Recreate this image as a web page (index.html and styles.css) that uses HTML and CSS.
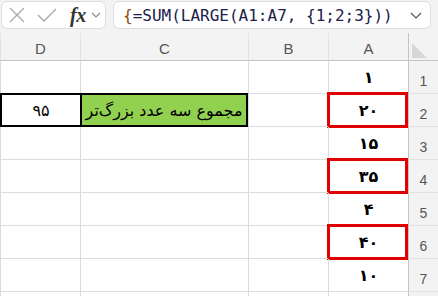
FILE: index.html
```html
<!DOCTYPE html>
<html lang="fa">
<head>
  <meta charset="UTF-8">
  <title>جمع سه عدد بزرگ‌تر</title>
  <link rel="stylesheet" href="styles.css">
</head>
<body>
  <div class="toolbar">
    <div class="namebox">
      <svg class="ico" width="16" height="16" viewBox="0 0 16 16"><path d="M1 1 L15 15 M15 1 L1 15" stroke="#a8a8a8" stroke-width="1.3" fill="none"/></svg>
      <svg class="ico check" width="20" height="14" viewBox="0 0 20 14"><path d="M1 7 L7 13 L19 1" stroke="#a8a8a8" stroke-width="1.3" fill="none"/></svg>
      <span class="fx">fx</span>
      <svg class="chev" width="10" height="6" viewBox="0 0 10 6"><path d="M1 1 L5 5 L9 1" stroke="#8a8a8a" stroke-width="1.2" fill="none"/></svg>
    </div>
    <div class="formula">
      <span class="ftext"><span class="brace">{</span>=SUM(LARGE(A1:A7, {1;2;3}))</span>
      <svg class="chev" width="12" height="7" viewBox="0 0 12 7"><path d="M1 1 L6 6 L11 1" stroke="#555" stroke-width="1.2" fill="none"/></svg>
    </div>
  </div>

  <div class="sheet" dir="rtl">
    <div class="hd corner"><span class="tri"></span></div>
    <div class="hd">A</div>
    <div class="hd">B</div>
    <div class="hd">C</div>
    <div class="hd">D</div>

    <div class="rn">1</div>
    <div class="cell val">۱</div>
    <div class="cell"></div>
    <div class="cell"></div>
    <div class="cell"></div>

    <div class="rn">2</div>
    <div class="cell val mark">۲۰</div>
    <div class="cell"></div>
    <div class="cell label">مجموع سه عدد بزرگ‌تر</div>
    <div class="cell total">۹۵</div>

    <div class="rn">3</div>
    <div class="cell val">۱۵</div>
    <div class="cell"></div>
    <div class="cell"></div>
    <div class="cell"></div>

    <div class="rn">4</div>
    <div class="cell val mark">۳۵</div>
    <div class="cell"></div>
    <div class="cell"></div>
    <div class="cell"></div>

    <div class="rn">5</div>
    <div class="cell val">۴</div>
    <div class="cell"></div>
    <div class="cell"></div>
    <div class="cell"></div>

    <div class="rn">6</div>
    <div class="cell val mark">۴۰</div>
    <div class="cell"></div>
    <div class="cell"></div>
    <div class="cell"></div>

    <div class="rn">7</div>
    <div class="cell val">۱۰</div>
    <div class="cell"></div>
    <div class="cell"></div>
    <div class="cell"></div>

    <div class="rn"></div>
    <div class="cell"></div>
    <div class="cell"></div>
    <div class="cell"></div>
    <div class="cell"></div>
  </div>
</body>
</html>
```

FILE: styles.css
```css
* { box-sizing: border-box; }
body { margin: 0; background: #fff; font-family: "DejaVu Sans", sans-serif; overflow: hidden; }

.toolbar { display: flex; gap: 7px; height: 33px; padding: 1px 7px 0 1px; background: #f3f3f3; }
.namebox, .formula { height: 28px; background: #fff; border: 1px solid #dedede; border-radius: 6px; display: flex; align-items: center; }
.namebox { width: 105px; padding-left: 7px; }
.namebox .check { margin-left: 12px; }
.fx { font-family: "Liberation Serif", serif; font-style: italic; font-weight: bold; font-size: 20px; color: #333; margin-left: 13px; letter-spacing: -0.5px; }
.namebox .chev { margin-left: 5px; }
.formula { flex: 1; padding: 0 8px 0 9px; justify-content: space-between; }
.ftext { font-family: "DejaVu Sans Mono", monospace; font-size: 16px; color: #20204a; white-space: pre; }
.brace { color: #8a4d10; }

.sheet { display: grid; grid-template-columns: 30px 80px 80px 168px 80px; grid-template-rows: 28px repeat(8, 33px); }
.hd { background: #f3f3f3; border-left: 1px solid #e2e2e2; border-bottom: 1px solid #c4c4c4; color: #555; font-family: "Liberation Sans", sans-serif; font-size: 15px; display: flex; align-items: center; justify-content: center; padding-top: 3px; }
.corner { border-left-color: #c4c4c4; position: relative; }
.tri { position: absolute; right: 11px; bottom: 2px; width: 0; height: 0; border-style: solid; border-width: 15px 0 0 15px; border-color: transparent transparent transparent #d6d6d6; }
.rn { background: #f3f3f3; border-left: 1px solid #c4c4c4; border-bottom: 1px solid #e2e2e2; color: #555; font-family: "Liberation Sans", sans-serif; font-size: 14px; display: flex; align-items: flex-end; justify-content: center; padding-bottom: 4px; }
.cell { border-left: 1px solid #dcdcdc; border-bottom: 1px solid #dcdcdc; display: flex; align-items: center; justify-content: center; font-size: 16px; color: #000; position: relative; }
.val { font-weight: bold; }
.mark::after { content: ""; position: absolute; top: -2px; bottom: -2px; left: -2px; right: 0; border: 3px solid #e00000; }
.label { background: #92d050; border: 2px solid #000; margin-top: -1px; font-size: 16px; }
.total { border: 2px solid #000; border-right: none; margin-top: -1px; }
```
